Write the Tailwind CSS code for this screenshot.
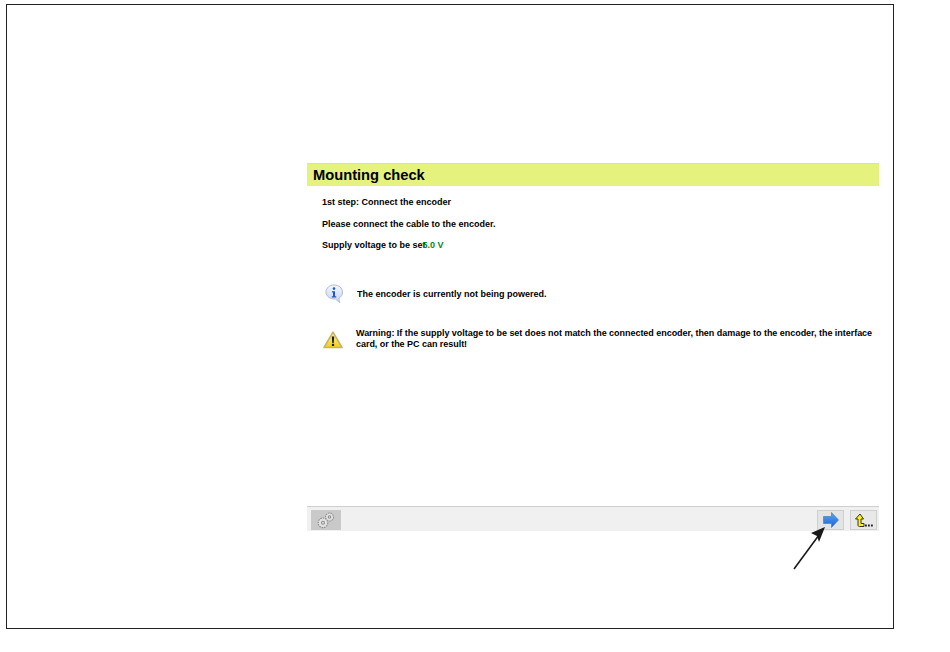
<!DOCTYPE html>
<html lang="en">
<head>
  <meta charset="UTF-8" />
  <title>Mounting check</title>
  <script src="https://cdn.jsdelivr.net/npm/@tailwindcss/browser@4"></script>
</head>
<body class="bg-white font-['Liberation_Sans',Arial,sans-serif] text-black">
  <div class="relative ml-[6px] mt-[4px] w-[888px] h-[625px] border border-[#222] pl-[300px] pt-[158px]">

    <!-- Panel -->
    <div class="w-[572px] h-[368px] flex flex-col border-t border-[#d8d8d8]">
      <div class="h-[22px] bg-[#e6f27e] pl-[6px] flex items-center text-[14.700px] leading-none font-bold">Mounting check</div>

      <div class="flex-1 pl-[15px] text-[9px] font-bold leading-[11px]">
        <p class="mt-[11px]">1st step: Connect the encoder</p>
        <p class="mt-[11px]">Please connect the cable to the encoder.</p>
        <p class="mt-[10px]">Supply voltage to be set<span class="text-[#008a1e] -ml-[3px]">5.0 V</span></p>

        <div class="flex items-center mt-[33px] ml-[2px] gap-[13px]">
          <svg class="w-[20px] h-[20px] shrink-0" viewBox="0 0 20 20">
            <defs>
              <linearGradient id="bubble" x1="0" y1="0" x2="0" y2="1">
                <stop offset="0" stop-color="#f4f7ff"/>
                <stop offset="1" stop-color="#c4d2f2"/>
              </linearGradient>
            </defs>
            <path d="M10 1c5 0 8.500 3 8.500 7 0 3-1.500 5-3.500 6 0 2 .5 3.500 1 4.500-2-1-3.500-2.500-4.500-3.500-5 .5-9.500-2.500-9.500-7C2 4 5.500 1 10 1z" fill="url(#bubble)" stroke="#b3bbd0" stroke-width="1"/>
            <circle cx="10" cy="4.600" r="1.300" fill="#2458c0"/>
            <path d="M8 7.300h3v5h1.200v1.200H7.800v-1.200H9V8.500H8z" fill="#2458c0"/>
          </svg>
          <span>The encoder is currently not being powered.</span>
        </div>

        <div class="flex items-start mt-[24px] ml-[1px] gap-[13px]">
          <svg class="w-[20px] h-[18px] shrink-0 mt-[3px]" viewBox="0 0 20 18">
            <defs>
              <linearGradient id="warn" x1="0" y1="0" x2="0" y2="1">
                <stop offset="0" stop-color="#fff09a"/>
                <stop offset="1" stop-color="#f5d010"/>
              </linearGradient>
            </defs>
            <path d="M10 1.200 19 16.500H1z" fill="url(#warn)" stroke="#c4b46e" stroke-width="1.600" stroke-linejoin="round"/>
            <path d="M8.800 5.500h2.400l-.5 6.500H9.300z" fill="#1a1a1a"/>
            <rect x="8.900" y="12.800" width="2.200" height="2.200" fill="#1a1a1a"/>
          </svg>
          <span class="tracking-[-0.035px]">Warning: If the supply voltage to be set does not match the connected encoder, then damage to the encoder, the interface card, or the PC can result!</span>
        </div>
      </div>

      <!-- Button bar -->
      <div class="h-[25px] bg-[#f0f0f0] border-t border-[#cfcfcf] flex items-center pl-[4px] pr-[2px] pt-[2px] gap-[6px]">
        <div class="w-[30px] h-[20px] bg-[#c9c9c9] flex items-center justify-center mr-auto">
          <svg class="w-[20px] h-[18px]" viewBox="0 0 20 18" fill="#e2e2e2" stroke="#8f8f8f" stroke-width="1.100">
            <circle cx="13.500" cy="6" r="4" stroke-dasharray="1.600 .8"/>
            <circle cx="7" cy="11.800" r="4.800" stroke-dasharray="1.600 .8"/>
            <circle cx="7" cy="11.800" r="1.500"/>
            <circle cx="13.500" cy="6" r="1.200"/>
          </svg>
        </div>
        <div class="w-[27px] h-[20px] bg-[#e4e4e4] border border-[#cfcfcf] flex items-center justify-center">
          <svg class="w-[16px] h-[16px]" viewBox="0 0 16 16">
            <defs>
              <linearGradient id="next" x1="0" y1="0" x2="0" y2="1">
                <stop offset="0" stop-color="#5aa6f0"/>
                <stop offset="1" stop-color="#1763d8"/>
              </linearGradient>
            </defs>
            <path d="M.5 4.500h8V.5L15.500 8 8.500 15.500v-4h-8z" fill="url(#next)" stroke="#4a7fb8" stroke-width=".7"/>
          </svg>
        </div>
        <div class="w-[27px] h-[20px] bg-[#e8e8e8] border border-[#cfcfcf] flex items-center justify-center">
          <svg class="w-[19px] h-[15px]" viewBox="0 0 19 15">
            <path d="M6 1 1.500 6H4v6c0 1 .5 1.500 1.500 1.500H10v-3H7V6h2.500z" fill="#ffef1a" stroke="#333" stroke-width="1"/>
            <rect x="11" y="11.500" width="1.800" height="2" fill="#222"/>
            <rect x="14" y="11.500" width="1.800" height="2" fill="#222"/>
            <rect x="17" y="11.500" width="1.800" height="2" fill="#222"/>
          </svg>
        </div>
      </div>
    </div>

    <!-- Callout arrow -->
    <svg class="absolute left-[779px] top-[515px] w-[50px] h-[55px]" viewBox="0 0 50 55" fill="none">
      <path d="M8 49 33 15" stroke="#1a1a1a" stroke-width="1.600"/>
      <path d="M39 7 25 13 31 16 33 22z" fill="#1a1a1a"/>
    </svg>
  </div>
</body>
</html>
